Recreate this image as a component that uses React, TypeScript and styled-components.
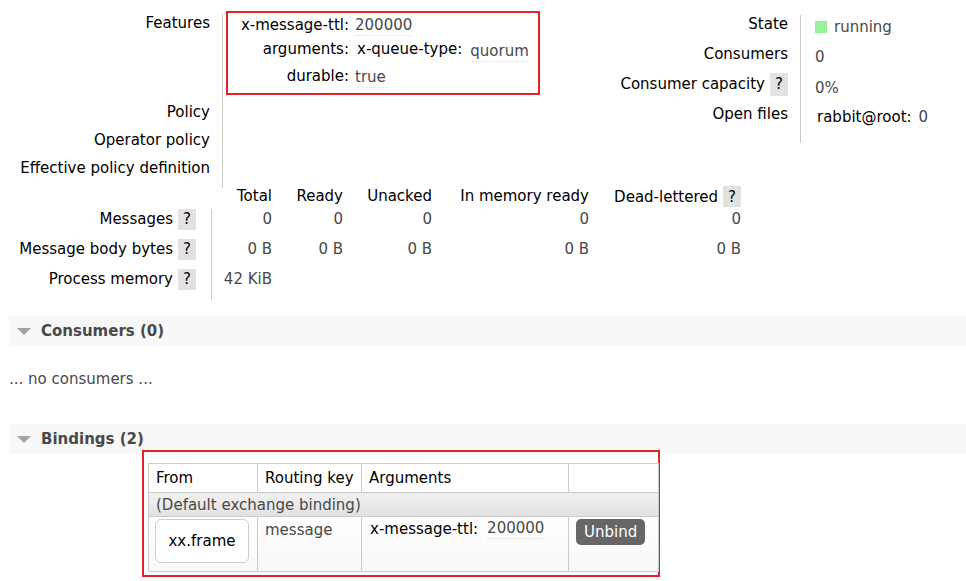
import React from "react";
import styled, { createGlobalStyle } from "styled-components";

const GlobalStyle = createGlobalStyle`
  html, body {
    margin: 0;
    padding: 0;
    background: #ffffff;
  }
  body {
    font-family: "DejaVu Sans", Verdana, sans-serif;
    font-size: 15px;
    line-height: 20px;
    color: #484848;
  }
`;

const Page = styled.div`
  padding: 9px 0 0 9px;
`;

const Summary = styled.div`
  display: flex;
  align-items: flex-start;
`;

/* ---------- details grid (left) ---------- */

const DetailsGrid = styled.div`
  flex: 0 0 591px;
  display: grid;
  grid-template-columns: 213px 1px 1fr;
  grid-template-rows: auto 28px 28px 28px;
`;

const Divider = styled.div<{ $rows: string; $top: number; $bottom: number }>`
  grid-column: 2;
  grid-row: ${(p) => p.$rows};
  align-self: stretch;
  background: #cccccc;
  margin-top: ${(p) => p.$top}px;
  margin-bottom: ${(p) => p.$bottom}px;
`;

const Label = styled.div`
  grid-column: 1;
  padding: 4px 12px 4px 0;
  text-align: right;
  color: #000000;
  white-space: nowrap;
`;

const Value = styled.div`
  grid-column: 3;
  padding-left: 3px;
  display: flex;
  align-items: flex-start;
`;

const Highlight = styled.div`
  margin: 2px 0 3px;
  width: 314px;
  box-sizing: border-box;
  border: 2px solid #e5202b;
`;

const FeatureTable = styled.div`
  display: grid;
  grid-template-columns: 121px auto;
  grid-template-rows: 24px 27px 27px;
  column-gap: 6px;
  padding-top: 2px;
`;

const Key = styled.span`
  color: #000000;
  text-align: right;
  white-space: nowrap;
`;

const Abbr = styled.span<{ $top?: number }>`
  color: #484848;
  border-bottom: 1px dotted #dddddd;
  line-height: 19px;
  display: inline-block;
  margin-top: ${(p) => p.$top ?? 0}px;
  white-space: nowrap;
`;

const Nested = styled.div`
  display: flex;
  align-items: flex-start;
  gap: 8px;
  padding-left: 2px;
`;

/* ---------- state grid (right) ---------- */

const StateGrid = styled.div`
  display: grid;
  grid-template-columns: 200px 1px 1fr;
  grid-template-rows: repeat(4, 30px);
`;

const StateLabel = styled.div`
  grid-column: 1;
  padding: 5px 12px 5px 0;
  display: flex;
  justify-content: flex-end;
  align-items: center;
  color: #000000;
  white-space: nowrap;
`;

const StateValue = styled.div<{ $shift?: number }>`
  grid-column: 3;
  padding: ${(p) => 5 + (p.$shift ?? 0)}px 0 0 14px;
  display: flex;
  align-items: center;
  gap: 7px;
  white-space: nowrap;
`;

const StatusDot = styled.span`
  width: 12px;
  height: 12px;
  background: #99f099;
  display: inline-block;
`;

const OpenFilesKey = styled(Key)`
  margin-left: 2px;
`;

const Help = styled.span<{ $h?: number }>`
  display: inline-flex;
  align-items: center;
  justify-content: center;
  width: 18px;
  height: ${(p) => p.$h ?? 21}px;
  margin-left: 5px;
  background: #e2e2e2;
  color: #000000;
  flex-shrink: 0;
`;

/* ---------- message stats ---------- */

const StatsGrid = styled.div`
  margin-top: 3px;
  display: grid;
  grid-template-columns: 202px 1px 60px 71px 89px 157px 152px;
  grid-template-rows: 24px 30px 30px 30px;
  align-items: start;
`;

const StatsHead = styled.div<{ $col: number }>`
  grid-column: ${(p) => p.$col};
  grid-row: 1;
  padding-top: 1px;
  display: flex;
  justify-content: flex-end;
  align-items: center;
  color: #000000;
  white-space: nowrap;
`;

const StatsLabel = styled.div<{ $row: number }>`
  grid-column: 1;
  grid-row: ${(p) => p.$row};
  padding-right: 15px;
  display: flex;
  justify-content: flex-end;
  align-items: center;
  height: 20px;
  color: #000000;
  white-space: nowrap;
`;

const StatsCell = styled.div<{ $row: number; $col: number }>`
  grid-column: ${(p) => p.$col};
  grid-row: ${(p) => p.$row};
  text-align: right;
  white-space: nowrap;
`;

/* ---------- sections ---------- */

const SectionBar = styled.div<{ $top: number }>`
  margin-top: ${(p) => p.$top}px;
  height: 30px;
  background: #f8f8f8;
  display: flex;
  align-items: center;
  padding-left: 8px;
  gap: 10px;
`;

const Arrow = styled.span`
  width: 0;
  height: 0;
  border-left: 7px solid transparent;
  border-right: 7px solid transparent;
  border-top: 7px solid #a3a3a3;
  margin-top: 1px;
`;

const SectionTitle = styled.h2`
  margin: 0;
  font-size: 15px;
  font-weight: bold;
  color: #484848;
`;

const EmptyNote = styled.p`
  margin: 23px 0 0;
`;

const BindingsBox = styled.div`
  position: relative;
  margin: -4px 0 0 133px;
  width: 518px;
  box-sizing: border-box;
  border: 2px solid #e5202b;
  padding: 11px 2px 3px 4px;
`;

const Table = styled.table`
  border-collapse: collapse;
  table-layout: fixed;
  width: 510px;
  border: 1px solid #cccccc;
`;

const Th = styled.th<{ $w: number }>`
  box-sizing: border-box;
  width: ${(p) => p.$w}px;
  height: 29px;
  padding: 0 7px;
  border: 1px solid #cccccc;
  text-align: left;
  font-weight: normal;
  color: #000000;
  white-space: nowrap;
  background: #ffffff;
`;

const GroupCell = styled.td`
  box-sizing: border-box;
  height: 24px;
  padding: 0 7px;
  border: 1px solid #cccccc;
  background: linear-gradient(#f1f1f1, #e1e1e1);
  color: #484848;
`;

const DataRow = styled.tr`
  background: linear-gradient(#ffffff, #f7f7f7);
`;

const Td = styled.td<{ $pad?: string }>`
  box-sizing: border-box;
  height: 55px;
  padding: ${(p) => p.$pad ?? "3px 7px"};
  border: 1px solid #cccccc;
  vertical-align: top;
  white-space: nowrap;
`;

const FromLink = styled.span`
  display: flex;
  align-items: center;
  justify-content: center;
  width: 94px;
  height: 44px;
  box-sizing: border-box;
  border: 1px solid #cccccc;
  border-radius: 6px;
  background: #ffffff;
  color: #000000;
`;

const ArgRow = styled.div`
  display: flex;
  gap: 9px;
  padding-left: 1px;
`;

const UnbindButton = styled.button`
  height: 26px;
  padding: 0 8px;
  border: 0;
  border-radius: 5px;
  background: #666666;
  color: #ffffff;
  font-family: inherit;
  font-size: 15px;
  cursor: pointer;
`;

const details = ["Policy", "Operator policy", "Effective policy definition"];

const stats = [
  { label: "Messages", values: ["0", "0", "0", "0", "0"] },
  { label: "Message body bytes", values: ["0 B", "0 B", "0 B", "0 B", "0 B"] },
  { label: "Process memory", values: ["42 KiB"] },
];

const App = () => {
  return (
    <Page>
      <GlobalStyle />
      <Summary>
        <DetailsGrid>
          <Label>Features</Label>
          <Divider $rows="1 / 5" $top={5} $bottom={-6} />
          <Value>
            <Highlight>
              <FeatureTable>
                <Key>x-message-ttl:</Key>
                <span>
                  <Abbr>200000</Abbr>
                </span>
                <Key>arguments:</Key>
                <Nested>
                  <Key>x-queue-type:</Key>
                  <Abbr $top={3}>quorum</Abbr>
                </Nested>
                <Key>durable:</Key>
                <span>
                  <Abbr $top={2}>true</Abbr>
                </span>
              </FeatureTable>
            </Highlight>
          </Value>
          {details.map((d) => (
            <Label key={d}>{d}</Label>
          ))}
        </DetailsGrid>

        <StateGrid>
          <StateLabel>State</StateLabel>
          <Divider $rows="1 / 5" $top={6} $bottom={-14} />
          <StateValue $shift={1}>
            <StatusDot />
            running
          </StateValue>
          <StateLabel>Consumers</StateLabel>
          <StateValue>0</StateValue>
          <StateLabel>
            Consumer capacity<Help $h={23}>?</Help>
          </StateLabel>
          <StateValue $shift={2}>0%</StateValue>
          <StateLabel>Open files</StateLabel>
          <StateValue>
            <OpenFilesKey>rabbit@root:</OpenFilesKey>
            <Abbr $top={2}>0</Abbr>
          </StateValue>
        </StateGrid>
      </Summary>

      <StatsGrid>
        <StatsHead $col={3}>Total</StatsHead>
        <StatsHead $col={4}>Ready</StatsHead>
        <StatsHead $col={5}>Unacked</StatsHead>
        <StatsHead $col={6}>In memory ready</StatsHead>
        <StatsHead $col={7}>
          Dead-lettered<Help>?</Help>
        </StatsHead>
        <Divider $rows="2 / 5" $top={0} $bottom={-1} />
        {stats.map((s, i) => (
          <React.Fragment key={s.label}>
            <StatsLabel $row={i + 2}>
              {s.label}
              <Help>?</Help>
            </StatsLabel>
            {s.values.map((v, j) => (
              <StatsCell key={j} $row={i + 2} $col={j + 3}>
                {v}
              </StatsCell>
            ))}
          </React.Fragment>
        ))}
      </StatsGrid>

      <SectionBar $top={17}>
        <Arrow />
        <SectionTitle>Consumers (0)</SectionTitle>
      </SectionBar>
      <EmptyNote>... no consumers ...</EmptyNote>

      <SectionBar $top={35}>
        <Arrow />
        <SectionTitle>Bindings (2)</SectionTitle>
      </SectionBar>
      <BindingsBox>
        <Table>
          <thead>
            <tr>
              <Th $w={109}>From</Th>
              <Th $w={104}>Routing key</Th>
              <Th $w={207}>Arguments</Th>
              <Th $w={90}></Th>
            </tr>
          </thead>
          <tbody>
            <tr>
              <GroupCell colSpan={4}>(Default exchange binding)</GroupCell>
            </tr>
            <DataRow>
              <Td $pad="2px 6px">
                <FromLink>xx.frame</FromLink>
              </Td>
              <Td>message</Td>
              <Td $pad="2px 7px">
                <ArgRow>
                  <Key>x-message-ttl:</Key>
                  <Abbr>200000</Abbr>
                </ArgRow>
              </Td>
              <Td $pad="2px 7px">
                <UnbindButton>Unbind</UnbindButton>
              </Td>
            </DataRow>
          </tbody>
        </Table>
      </BindingsBox>
    </Page>
  );
};

export default App;
